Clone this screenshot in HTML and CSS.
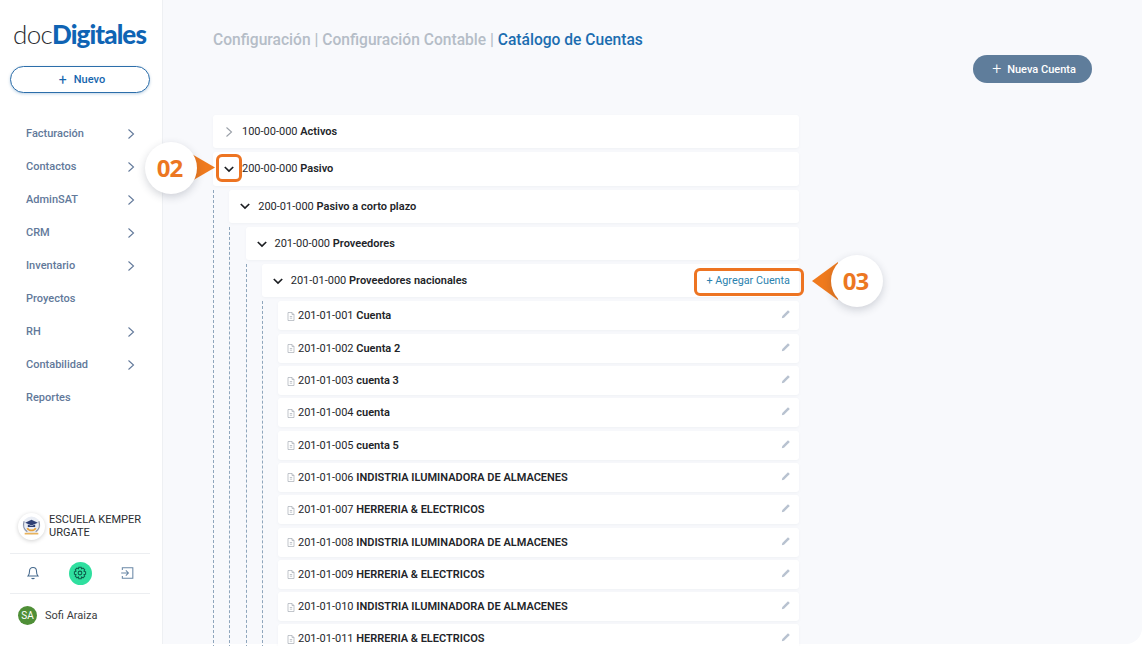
FILE: index.html
```html
<!DOCTYPE html>
<html lang="es">
<head>
<meta charset="utf-8">
<title>Catálogo de Cuentas</title>
<link rel="stylesheet" href="styles.css">
</head>
<body>
<svg class="defs" width="0" height="0" aria-hidden="true">
  <symbol id="right" viewBox="0 0 10 12"><path d="M2.5 1.5 7.5 6l-5 4.5" fill="none" stroke="currentColor" stroke-width="1.1"/></symbol>
  <symbol id="down" viewBox="0 0 12 10"><path d="M1.8 3 6 7l4.2-4" fill="none" stroke="currentColor" stroke-width="1.7"/></symbol>
  <symbol id="doc" viewBox="0 0 8 9"><path d="M1 .5h4l2 2v6H1z M5 .5v2h2" fill="none" stroke="currentColor" stroke-width=".7"/><path d="M2.8 4.5h2.4M2.8 6.2h2.4" stroke="currentColor" stroke-width=".7"/></symbol>
  <symbol id="pencil" viewBox="0 0 10 10"><path d="M.8 9.2 1.3 7 7 1.2l1.8 1.8L3 8.7z" fill="currentColor"/></symbol>
</svg>
<div class="app">
  <aside class="sidebar">
    <div class="logo"><span class="logo-doc">doc</span><span class="logo-dig">Digitales</span></div>
    <button class="new-btn"><span class="plus">+</span>Nuevo</button>
    <nav class="nav">
      <a class="nav-item">Facturación<svg class="nav-chev"><use href="#right"/></svg></a>
      <a class="nav-item">Contactos<svg class="nav-chev"><use href="#right"/></svg></a>
      <a class="nav-item">AdminSAT<svg class="nav-chev"><use href="#right"/></svg></a>
      <a class="nav-item">CRM<svg class="nav-chev"><use href="#right"/></svg></a>
      <a class="nav-item">Inventario<svg class="nav-chev"><use href="#right"/></svg></a>
      <a class="nav-item">Proyectos</a>
      <a class="nav-item">RH<svg class="nav-chev"><use href="#right"/></svg></a>
      <a class="nav-item">Contabilidad<svg class="nav-chev"><use href="#right"/></svg></a>
      <a class="nav-item">Reportes</a>
    </nav>
    <div class="company">
      <span class="company-logo">
        <svg width="21" height="21" viewBox="0 0 20 20">
          <circle cx="10" cy="9" r="8.5" fill="#e9edf5"/>
          <path d="M3 5c-1.500 4 0 8 3 10M17 5c1.500 4 0 8-3 10" fill="none" stroke="#8a93a8" stroke-width="1.200"/>
          <path d="M10 3.500 16 6.500 10 9 4 6.500z" fill="#2e3f75"/>
          <path d="M6.500 8v2.500h7V8L10 9.500z" fill="#2e3f75"/>
          <path d="M6 11.500c1.500 3 6.500 3 8 0" fill="none" stroke="#e8a33c" stroke-width="1.600"/>
          <rect x="3.500" y="16" width="13" height="1.600" fill="#e8b35c"/>
        </svg>
      </span>
      <span class="company-name">ESCUELA KEMPER URGATE</span>
    </div>
    <div class="tools">
      <svg class="tool" viewBox="0 0 12 12"><path d="M6 1.300c-2 0-3 1.500-3 3.200 0 2.200-.4 3.100-1.200 4h8.400c-.8-.9-1.200-1.800-1.200-4 0-1.700-1-3.200-3-3.200zM4.800 10.300c.4.700 2 .7 2.400 0" fill="none" stroke="#44688c" stroke-width=".9"/></svg>
      <span class="tool-active">
        <svg class="tool" viewBox="0 0 12 12"><circle cx="6" cy="6" r="1.600" fill="none" stroke="#0d5c4a" stroke-width=".9"/><path d="M5 1h2l.3 1.400 1.300-.6 1.400 1.400-.6 1.300L10.800 5v2l-1.400.4.600 1.300-1.400 1.400-1.300-.6L7 11H5l-.3-1.500-1.300.6L2 8.700l.6-1.300L1.200 7V5l1.400-.5L2 3.200l1.400-1.400 1.300.6z" fill="none" stroke="#0d5c4a" stroke-width=".9"/></svg>
      </span>
      <svg class="tool" viewBox="0 0 12 12"><path d="M2 3.500V1.500h9v9H2V8.500" fill="none" stroke="#6a88a6" stroke-width=".9"/><path d="M1 6h6M5 3.800 7.200 6 5 8.200" fill="none" stroke="#6a88a6" stroke-width=".9"/></svg>
    </div>
    <div class="user"><span class="avatar">SA</span><span class="user-name">Sofi Araiza</span></div>
  </aside>

  <main class="main">
    <h1 class="crumbs">Configuración | Configuración Contable | <span class="crumb-now">Catálogo de Cuentas</span></h1>
    <div class="actions"><button class="primary"><span class="primary-plus">+</span>Nueva Cuenta</button></div>

    <div class="tree">
      <div class="row"><svg class="chev muted"><use href="#right"/></svg><span>100-00-000 <b>Activos</b></span></div>
      <div class="row"><svg class="chev"><use href="#down"/></svg><span>200-00-000 <b>Pasivo</b></span></div>
      <div class="children">
        <div class="row"><svg class="chev"><use href="#down"/></svg><span>200-01-000 <b>Pasivo a corto plazo</b></span></div>
        <div class="children">
          <div class="row"><svg class="chev"><use href="#down"/></svg><span>201-00-000 <b>Proveedores</b></span></div>
          <div class="children">
            <div class="row"><svg class="chev"><use href="#down"/></svg><span>201-01-000 <b>Proveedores nacionales</b></span><a class="add">+ Agregar Cuenta</a></div>
            <div class="children leaves">
              <div class="leaf"><svg class="doc"><use href="#doc"/></svg><span>201-01-001 <b>Cuenta</b></span><svg class="edit"><use href="#pencil"/></svg></div>
              <div class="leaf"><svg class="doc"><use href="#doc"/></svg><span>201-01-002 <b>Cuenta 2</b></span><svg class="edit"><use href="#pencil"/></svg></div>
              <div class="leaf"><svg class="doc"><use href="#doc"/></svg><span>201-01-003 <b>cuenta 3</b></span><svg class="edit"><use href="#pencil"/></svg></div>
              <div class="leaf"><svg class="doc"><use href="#doc"/></svg><span>201-01-004 <b>cuenta</b></span><svg class="edit"><use href="#pencil"/></svg></div>
              <div class="leaf"><svg class="doc"><use href="#doc"/></svg><span>201-01-005 <b>cuenta 5</b></span><svg class="edit"><use href="#pencil"/></svg></div>
              <div class="leaf"><svg class="doc"><use href="#doc"/></svg><span>201-01-006 <b>INDISTRIA ILUMINADORA DE ALMACENES</b></span><svg class="edit"><use href="#pencil"/></svg></div>
              <div class="leaf"><svg class="doc"><use href="#doc"/></svg><span>201-01-007 <b>HERRERIA &amp; ELECTRICOS</b></span><svg class="edit"><use href="#pencil"/></svg></div>
              <div class="leaf"><svg class="doc"><use href="#doc"/></svg><span>201-01-008 <b>INDISTRIA ILUMINADORA DE ALMACENES</b></span><svg class="edit"><use href="#pencil"/></svg></div>
              <div class="leaf"><svg class="doc"><use href="#doc"/></svg><span>201-01-009 <b>HERRERIA &amp; ELECTRICOS</b></span><svg class="edit"><use href="#pencil"/></svg></div>
              <div class="leaf"><svg class="doc"><use href="#doc"/></svg><span>201-01-010 <b>INDISTRIA ILUMINADORA DE ALMACENES</b></span><svg class="edit"><use href="#pencil"/></svg></div>
              <div class="leaf"><svg class="doc"><use href="#doc"/></svg><span>201-01-011 <b>HERRERIA &amp; ELECTRICOS</b></span><svg class="edit"><use href="#pencil"/></svg></div>
            </div>
          </div>
        </div>
      </div>
    </div>
  </main>
</div>

<div class="mark mark-box-02"></div>
<div class="arrow arrow-02"></div>
<div class="bubble bubble-02">02</div>
<div class="mark mark-box-03"></div>
<div class="arrow arrow-03"></div>
<div class="bubble bubble-03">03</div>
</body>
</html>
```

FILE: styles.css
```css
* { box-sizing: border-box; }
html, body { margin: 0; height: 100%; }
body {
  position: relative;
  width: 1142px;
  height: 646px;
  overflow: hidden;
  background: #fff;
  font-family: Roboto, "Liberation Sans", sans-serif;
  color: #26282c;
}
.defs { position: absolute; }
.app { display: flex; height: 644px; }

/* Sidebar */
.sidebar {
  flex: 0 0 163px;
  width: 163px;
  min-width: 0;
  display: flex;
  flex-direction: column;
  padding: 0 12px 0 10px;
  background: #fff;
  border-right: 1px solid #eef0f3;
}
.logo {
  margin: 18px 0 0 3px;
  height: 33px;
  line-height: 33px;
  white-space: nowrap;
  font-family: Lato, sans-serif;
  font-size: 26px;
  letter-spacing: -0.7px;
}
.logo-doc { font-weight: 300; color: #2a2c30; }
.logo-dig { font-weight: 900; color: #0f64b4; letter-spacing: -0.9px; }
.new-btn {
  display: flex;
  align-items: center;
  justify-content: center;
  margin-top: 15px;
  width: 140px;
  height: 27px;
  padding: 0 0 0 4px;
  border: 1px solid #2c6eaa;
  border-radius: 14px;
  background: #fff;
  box-shadow: 0 1px 3px rgba(44, 110, 170, .3);
  color: #1766ae;
  font: 500 11px Roboto, sans-serif;
}
.plus { margin-right: 7px; font-size: 14px; font-weight: 400; line-height: 14px; }
.nav { display: flex; flex-direction: column; margin-top: 23.500px; }
.nav-item {
  display: flex;
  align-items: center;
  justify-content: space-between;
  height: 33px;
  padding: 0 0 0 16px;
  font-size: 11px;
  font-weight: 500;
  color: #62799a;
}
.nav-chev { width: 10px; height: 12px; margin: 2px 14px 0 0; color: #62799a; }
.company {
  display: flex;
  align-items: center;
  gap: 3px;
  margin-top: auto;
  padding: 0 0 13px 8px;
}
.company-logo {
  flex: none;
  display: flex;
  align-items: center;
  justify-content: center;
  width: 27px;
  height: 27px;
  border-radius: 50%;
  background: #fff;
  box-shadow: 0 1px 4px rgba(0, 0, 0, .18);
  margin-right: 1px;
}
.company-name { font-size: 11px; line-height: 13px; color: #2b2d31; }
.tools {
  display: flex;
  align-items: center;
  justify-content: space-between;
  height: 41px;
  padding: 0 16px;
  border-top: 1px solid #eceef1;
  border-bottom: 1px solid #eceef1;
}
.tool { width: 14px; height: 14px; display: block; }
.tool-active {
  display: flex;
  align-items: center;
  justify-content: center;
  width: 23px;
  height: 23px;
  border-radius: 50%;
  background: #2fdf9f;
}
.user {
  display: flex;
  align-items: center;
  gap: 8px;
  height: 44px;
  padding: 0 0 0 8px;
  margin-bottom: 6.500px;
}
.avatar {
  display: flex;
  align-items: center;
  justify-content: center;
  width: 19px;
  height: 19px;
  border-radius: 50%;
  background: #4f8f37;
  color: #fff;
  font-size: 10px;
}
.user-name { font-size: 11px; color: #3a3c40; }

/* Main */
.main {
  flex: 1;
  min-width: 0;
  height: 644px;
  padding: 31px 50px 0 50px;
  background: #f8f9fc;
  border-bottom-right-radius: 16px;
}
.crumbs {
  margin: 0;
  font-size: 15.600px;
  line-height: 18px;
  font-weight: 500;
  color: #b5bdc7;
}
.crumb-now { color: #1c6db0; }
.actions { display: flex; justify-content: flex-end; margin-top: 6px; }
.primary {
  display: flex;
  align-items: center;
  justify-content: center;
  width: 119px;
  height: 28px;
  padding: 0 0 0 3px;
  border: 0;
  border-radius: 14px;
  background: #5f7d9b;
  color: #fff;
  font: 500 11px Roboto, sans-serif;
}
.primary-plus { margin-right: 6px; font-size: 16px; font-weight: 300; line-height: 16px; }

/* Tree */
.tree { width: 586px; margin-top: 32px; }
.row, .leaf {
  display: flex;
  align-items: center;
  background: #fff;
  border-radius: 3px;
  box-shadow: 0 1px 3px rgba(70, 90, 120, .05);
  font-size: 11px;
  color: #26282c;
  white-space: nowrap;
}
.row { height: 33.300px; margin-bottom: 4px; padding: 0 8px 0 10px; }
.row b, .leaf b { font-weight: 600; color: #222428; }
.chev { flex: none; width: 12px; height: 10px; margin-right: 7px; color: #1c1e22; }
.chev.muted { width: 12px; height: 12px; color: #9aa0a8; }
.children {
  border-left: 1px dashed #8fa6bc;
  padding-left: 15.250px;
}
.leaf { height: 29px; margin-bottom: 3.300px; padding: 0 8px 0 9px; }
.doc { flex: none; width: 8px; height: 9px; margin: 1px 3px 0 0; color: #a8aeb6; }
.edit { flex: none; width: 10px; height: 10px; margin: -3px 0 0 auto; color: #b8c2d0; }
.add { margin-left: auto; padding-right: 1px; font-size: 10.800px; color: #2b82ae; }

/* Callouts over the page */
.mark {
  position: absolute;
  border: 3px solid #ed7422;
  border-radius: 6px;
}
.mark-box-02 { left: 216px; top: 154px; width: 26px; height: 28px; }
.mark-box-03 { left: 694px; top: 268px; width: 110px; height: 28px; }
.arrow { position: absolute; background: #ef7a1e; }
.arrow-02 {
  left: 190px; top: 153px; width: 25px; height: 29px;
  clip-path: polygon(0 0, 100% 50%, 0 100%);
}
.arrow-03 {
  left: 812px; top: 262px; width: 26px; height: 38px;
  clip-path: polygon(100% 0, 0 50%, 100% 100%);
}
.bubble {
  position: absolute;
  display: flex;
  align-items: center;
  justify-content: center;
  width: 52px;
  height: 52px;
  padding: 0 3px 2px 0;
  border-radius: 50%;
  background: #fff;
  box-shadow: 0 3px 8px rgba(40, 50, 70, .2);
  color: #ec7722;
  font-family: "Open Sans", sans-serif;
  font-size: 24px;
  font-weight: 700;
  letter-spacing: -1px;
}
.bubble-02 { left: 145px; top: 142px; }
.bubble-03 { left: 831px; top: 255px; }
```
